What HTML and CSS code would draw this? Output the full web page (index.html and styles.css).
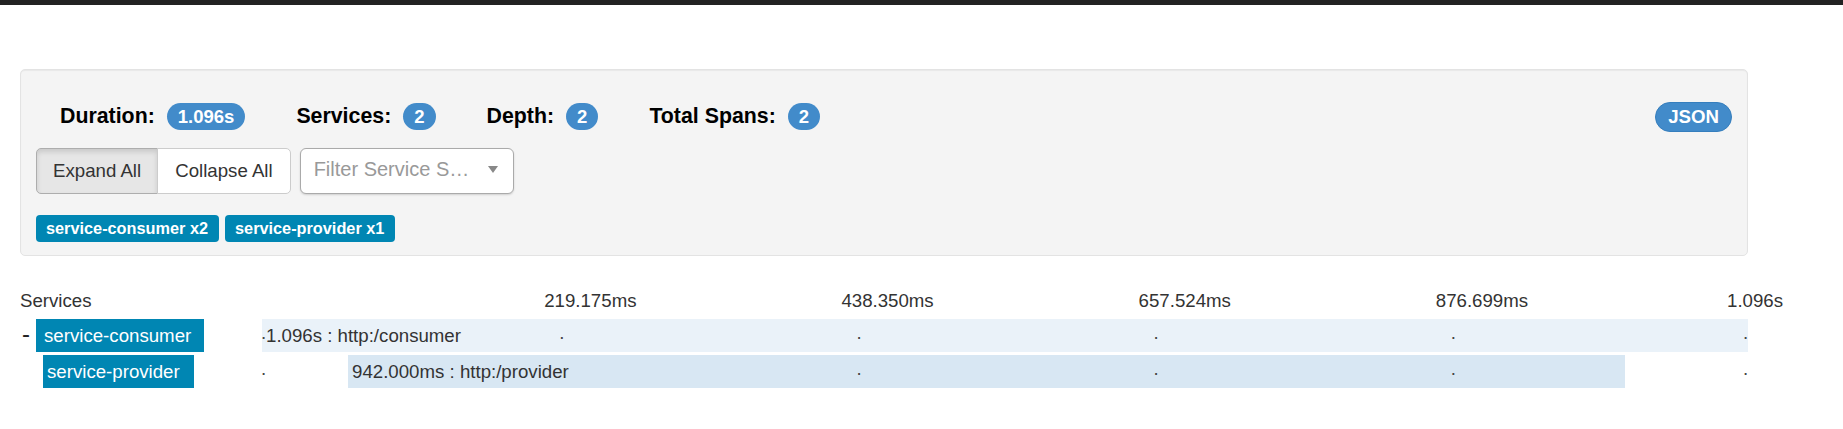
FILE: index.html
```html
<!DOCTYPE html>
<html lang="en">
<head>
<meta charset="utf-8">
<title>Trace</title>
<link rel="stylesheet" href="styles.css">
</head>
<body>
<div class="topbar"></div>
<div class="page">
  <div class="well">
    <div class="summary">
      <ul class="stats">
        <li class="stat"><span class="stat-name">Duration:</span><span class="badge">1.096s</span></li>
        <li class="stat"><span class="stat-name">Services:</span><span class="badge">2</span></li>
        <li class="stat"><span class="stat-name">Depth:</span><span class="badge">2</span></li>
        <li class="stat"><span class="stat-name">Total Spans:</span><span class="badge">2</span></li>
      </ul>
      <button class="json-btn" type="button">JSON</button>
    </div>
    <div class="controls">
      <div class="btn-group">
        <button class="btn active" type="button">Expand All</button>
        <button class="btn" type="button">Collapse All</button>
      </div>
      <div class="select">
        <span class="placeholder">Filter Service S…</span>
        <span class="caret"></span>
      </div>
    </div>
    <div class="tags">
      <span class="tag">service-consumer x2</span>
      <span class="tag">service-provider x1</span>
    </div>
  </div>

  <div class="trace">
    <div class="trace-header">
      <div class="handle">Services</div>
      <div class="timeline">
        <span class="tick-label t1">219.175ms</span>
        <span class="tick-label t2">438.350ms</span>
        <span class="tick-label t3">657.524ms</span>
        <span class="tick-label t4">876.699ms</span>
        <span class="tick-label t5">1.096s</span>
      </div>
    </div>
    <div class="rows">
      <div class="span-row">
        <div class="handle root"><span class="toggle">-</span><span class="svc">service-consumer</span></div>
        <div class="timeline">
          <div class="bar" style="left:0%;width:100%"><span class="bar-label">1.096s : http:/consumer</span></div>
          <span class="marker m0">.</span><span class="marker m1">.</span><span class="marker m2">.</span><span class="marker m3">.</span><span class="marker m4">.</span><span class="marker m5">.</span>
        </div>
      </div>
      <div class="span-row">
        <div class="handle child"><span class="svc svc-child">service-provider</span></div>
        <div class="timeline">
          <div class="bar bar-child" style="left:5.79%;width:85.95%"><span class="bar-label">942.000ms : http:/provider</span></div>
          <span class="marker m0">.</span><span class="marker m1">.</span><span class="marker m2">.</span><span class="marker m3">.</span><span class="marker m4">.</span><span class="marker m5">.</span>
        </div>
      </div>
    </div>
  </div>
</div>
</body>
</html>
```

FILE: styles.css
```css
* { box-sizing: border-box; }

body {
  margin: 0;
  font-family: "Liberation Sans", Arial, Helvetica, sans-serif;
  font-size: 18.67px;
  color: #333;
  background: #fff;
}

.topbar {
  height: 5px;
  background: #222;
}

.page {
  width: 1728px;
  margin-left: 20px;
}

/* summary panel */
.well {
  margin-top: 64px;
  background: #f4f4f4;
  border: 1px solid #e3e3e3;
  border-radius: 5px;
  box-shadow: inset 0 1px 1px rgba(0, 0, 0, .05);
  padding: 32px 15px 13px;
}

.summary {
  display: flex;
  justify-content: space-between;
  align-items: baseline;
}

.stats {
  display: flex;
  align-items: baseline;
  gap: 51px;
  margin: 0;
  padding: 0 0 0 24px;
  list-style: none;
}

.stat {
  display: flex;
  align-items: baseline;
  gap: 12px;
}

.stat-name {
  font-weight: bold;
  font-size: 21.33px;
  line-height: 1.1;
  color: #000;
}

.badge {
  display: inline-block;
  height: 27px;
  line-height: 27px;
  padding: 0 11px;
  border-radius: 14px;
  background: #428bca;
  color: #fff;
  font-weight: bold;
  font-size: 18.5px;
}

.json-btn {
  height: 30px;
  line-height: 28px;
  padding: 0 12px;
  border: 1px solid #357ebd;
  border-radius: 15px;
  background: #428bca;
  color: #fff;
  font-family: inherit;
  font-weight: bold;
  font-size: 18.67px;
}

/* controls */
.controls {
  display: flex;
  gap: 9px;
  margin-top: 16px;
  height: 46px;
}

.btn-group {
  display: flex;
}

.btn {
  height: 46px;
  padding: 0 16px;
  border: 1px solid #ccc;
  background: #fff;
  color: #333;
  font-family: inherit;
  font-size: 18.67px;
  line-height: 44px;
}

.btn:first-child {
  border-radius: 5px 0 0 5px;
}

.btn:last-child {
  border-radius: 0 5px 5px 0;
  margin-left: -1px;
  padding: 0 17px;
}

.btn.active {
  background: #e6e6e6;
  border-color: #adadad;
  box-shadow: inset 0 3px 5px rgba(0, 0, 0, .125);
}

.select {
  width: 214px;
  height: 46px;
  display: flex;
  align-items: center;
  justify-content: space-between;
  padding: 0 15px 4px 13px;
  background: #fff;
  border: 1px solid #aaa;
  border-radius: 6px;
  box-shadow: 0 1px 2px rgba(0, 0, 0, .15);
}

.placeholder {
  color: #999;
  font-size: 20px;
  white-space: nowrap;
}

.caret {
  width: 0;
  height: 0;
  border-left: 5px solid transparent;
  border-right: 5px solid transparent;
  border-top: 7px solid #888;
}

.tags {
  display: flex;
  gap: 6px;
  margin-top: 21px;
}

.tag {
  height: 27px;
  line-height: 27px;
  padding: 0 11px 0 10px;
  border-radius: 4px;
  background: #0086b3;
  color: #fff;
  font-weight: bold;
  font-size: 16.3px;
}

/* trace timeline */
.trace {
  margin-top: 33px;
}

.trace-header {
  display: flex;
  height: 24px;
  line-height: 24px;
}

.handle {
  width: 242px;
  flex: none;
  display: flex;
}

.timeline {
  position: relative;
  flex: 1;
}

.tick-label {
  position: absolute;
  top: 0;
  white-space: nowrap;
}

.tick-label.t1 { left: calc(20% - 15px); }
.tick-label.t2 { left: calc(40% - 15px); }
.tick-label.t3 { left: calc(60% - 15px); }
.tick-label.t4 { left: calc(80% - 15px); }
.tick-label.t5 { left: calc(100% - 21px); }

.rows {
  margin-top: 6px;
  display: flex;
  flex-direction: column;
  gap: 3px;
}

.span-row {
  display: flex;
  height: 33px;
  line-height: 33px;
}

.handle.root {
  padding-left: 2px;
}

.handle.child {
  padding-left: 23px;
}

.toggle {
  width: 14px;
  font-size: 24px;
  line-height: 29px;
  color: #222;
}

.svc {
  height: 33px;
  padding: 0 13px 0 8px;
  background: #0086b3;
  color: #fff;
  white-space: nowrap;
}

.svc-child {
  padding: 0 14px 0 4px;
}

.bar {
  position: absolute;
  top: 0;
  bottom: 0;
  padding-left: 4px;
  background: #eaf2f9;
  white-space: nowrap;
}

.bar-child {
  background: #d8e7f3;
}

.bar-child .bar-label {
  position: relative;
  z-index: 1;
  background: #d8e7f3;
}

.marker {
  position: absolute;
  top: -3px;
  color: #444;
}

.marker.m0 { left: -1px; }
.marker.m1 { left: 20%; }
.marker.m2 { left: 40%; }
.marker.m3 { left: 60%; }
.marker.m4 { left: 80%; }
.marker.m5 { left: calc(100% - 5px); }
```
